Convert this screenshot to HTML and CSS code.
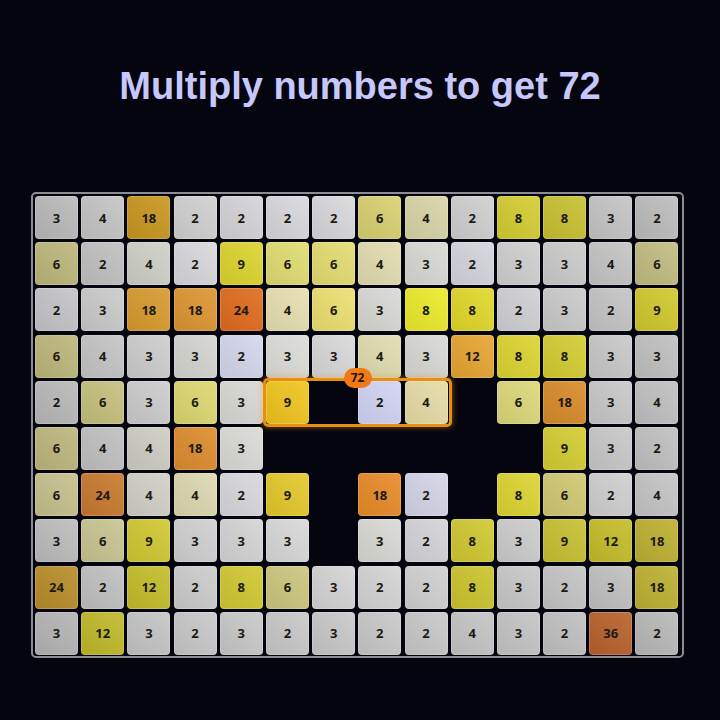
FILE: index.html
```html
<!DOCTYPE html>
<html>
<head>
<meta charset="utf-8">
<link rel="stylesheet" href="styles.css">
</head>
<body>
<h1 class="title">Multiply numbers to get 72</h1>
<div class="board">
  <div class="grid" id="grid">
    <div class="selection"><span class="badge">72</span></div>
  </div>
</div>
<script src="app.js"></script>
</body>
</html>
```
FILE: styles.css
```css
html, body {
  margin: 0;
  padding: 0;
  background: #05050f;
}
body {
  width: 720px;
  height: 720px;
  overflow: hidden;
  font-family: "Open Sans", "DejaVu Sans", sans-serif;
}
.title {
  margin: 0;
  padding-top: 64px;
  height: 128px;
  box-sizing: border-box;
  text-align: center;
  font-family: "Liberation Sans", Arial, sans-serif;
  font-weight: 700;
  font-size: 38px;
  line-height: 44px;
  color: #c6c7fb;
}
.board {
  margin: 64px 0 0 31px;
  width: 653px;
  height: 466px;
  box-sizing: border-box;
  border: 2px solid #8c8c92;
  border-radius: 5px;
  padding: 2px;
  background: #05050f;
}
.grid {
  position: relative;
  display: grid;
  grid-template-columns: repeat(14, 43px);
  grid-template-rows: repeat(10, 43px);
  gap: 3.2px;
}
.cell {
  border-radius: 4px;
  display: flex;
  align-items: center;
  justify-content: center;
  font-weight: 700;
  font-size: 13px;
  color: #1c1a14;
  background-image: linear-gradient(45deg, rgba(0,0,0,0.08), rgba(255,255,255,0.10));
  box-shadow: inset 0 0 0 1px rgba(255,255,255,0.18);
}
.cell.empty {
  background: transparent;
  box-shadow: none;
}
.selection {
  position: absolute;
  left: 228px;
  top: 182px;
  width: 189px;
  height: 49px;
  box-sizing: border-box;
  border: 3px solid #e8900e;
  border-radius: 5px;
  box-shadow: 0 0 6px rgba(240, 140, 20, 0.55);
  z-index: 2;
}
.badge {
  position: absolute;
  left: 50%;
  top: -13px;
  transform: translateX(-50%);
  width: 28px;
  height: 20px;
  border-radius: 10px;
  background: #f07a18;
  color: #2a1204;
  font-weight: 700;
  font-size: 12px;
  line-height: 20px;
  text-align: center;
}
```
FILE: app.js
```js
var rows = [
  [[3,'#b9b9b9'],[4,'#c4c4c4'],[18,'#c8961e'],[2,'#d0d0d0'],[2,'#d4d4d8'],[2,'#d8d8dc'],[2,'#d8d8dc'],[6,'#d8d070'],[4,'#d8d4a8'],[2,'#cfcfcf'],[8,'#d4cc30'],[8,'#c8c030'],[3,'#c4c4c4'],[2,'#bcbcbc']],
  [[6,'#bcb67a'],[2,'#c0c0c0'],[4,'#cfcfc8'],[2,'#d8d8dc'],[9,'#dcd42c'],[6,'#e0dc70'],[6,'#e4dc70'],[4,'#e2dcb0'],[3,'#d8d8d4'],[2,'#d4d4dc'],[3,'#cfcfcf'],[3,'#cbcbcb'],[4,'#c4c4c4'],[6,'#c0bc80']],
  [[2,'#c4c4c8'],[3,'#cacaca'],[18,'#d89a2c'],[18,'#de9430'],[24,'#e06a1c'],[4,'#e8dfb0'],[6,'#ecdf70'],[3,'#d8d8d4'],[8,'#ecea28'],[8,'#e0d828'],[2,'#d0d0d4'],[3,'#cacaca'],[2,'#c4c4c4'],[9,'#cfc82c']],
  [[6,'#bcb67a'],[4,'#c4c4c4'],[3,'#cdcdcd'],[3,'#d4d4d0'],[2,'#d4d6ec'],[3,'#dcdcd8'],[3,'#d8d8d8'],[4,'#e0dcb0'],[3,'#d8d8d4'],[12,'#e6a430'],[8,'#dcd430'],[8,'#d4cc30'],[3,'#c8c8c8'],[3,'#c0c0c0']],
  [[2,'#b8b8b8'],[6,'#c4c07c'],[3,'#cccccc'],[6,'#dcd870'],[3,'#d8d8d4'],[9,'#f0c41c'],null,[2,'#d2d2f4'],[4,'#e6dca6'],null,[6,'#dcd878'],[18,'#d88a28'],[3,'#c8c8c8'],[4,'#c0c0c0']],
  [[6,'#bcb67c'],[4,'#c0c0c0'],[4,'#cdcdc4'],[18,'#dc8c2c'],[3,'#dadad6'],null,null,null,null,null,null,[9,'#d4cc30'],[3,'#c8c8c8'],[2,'#c0c0c0']],
  [[6,'#c4c08c'],[24,'#c8782c'],[4,'#d0d0c8'],[4,'#dcd8b0'],[2,'#d8d8dc'],[9,'#e4c82a'],null,[18,'#e88a26'],[2,'#d4d4e8'],null,[8,'#dcd430'],[6,'#cfc870'],[2,'#cfcfcf'],[4,'#c4c4c4']],
  [[3,'#bcbcbc'],[6,'#c8c490'],[9,'#d0c830'],[3,'#d0d0d0'],[3,'#d4d4d4'],[3,'#d8d8d8'],null,[3,'#d8d8d4'],[2,'#d4d4d8'],[8,'#d0c830'],[3,'#cccccc'],[9,'#c8c030'],[12,'#c4bc28'],[18,'#bcb030']],
  [[24,'#b88c28'],[2,'#c0c0c0'],[12,'#c4bc28'],[2,'#cccccc'],[8,'#d0c830'],[6,'#ccc67c'],[3,'#d4d4d4'],[2,'#d4d4d4'],[2,'#d0d0d0'],[8,'#ccc42c'],[3,'#c8c8c8'],[2,'#c4c4c4'],[3,'#c0c0c0'],[18,'#bcb030']],
  [[3,'#b4b4b4'],[12,'#c0b828'],[3,'#c4c4c4'],[2,'#c8c8c8'],[3,'#c8c8c8'],[2,'#c8c8c8'],[3,'#c8c8c8'],[2,'#c8c8c8'],[2,'#c8c8c8'],[4,'#c4c4c4'],[3,'#c4c4c4'],[2,'#c0c0c0'],[36,'#b8602a'],[2,'#b8b8b8']]
];
var grid = document.getElementById('grid');
rows.forEach(function (row) {
  row.forEach(function (c) {
    var d = document.createElement('div');
    if (c) {
      d.className = 'cell';
      d.style.backgroundColor = c[1];
      d.textContent = c[0];
    } else {
      d.className = 'cell empty';
    }
    grid.appendChild(d);
  });
});
```
